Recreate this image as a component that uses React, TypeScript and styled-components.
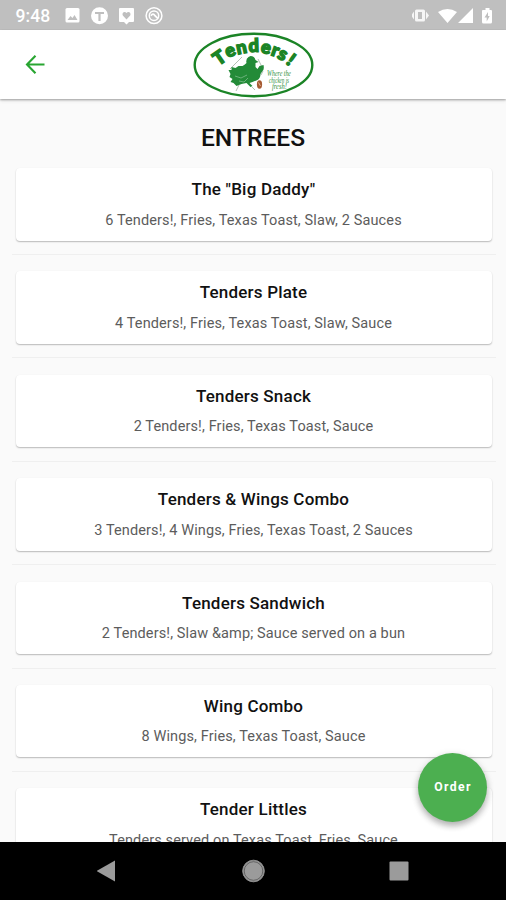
import React from 'react';
import styled, { createGlobalStyle } from 'styled-components';

const GlobalStyle = createGlobalStyle`
  * { box-sizing: border-box; }
  body { margin: 0; background: #fafafa; font-family: Roboto, 'Liberation Sans', sans-serif; }
`;

const Screen = styled.div`
  position: relative;
  display: flex;
  flex-direction: column;
  width: 506px;
  height: 900px;
  overflow: hidden;
  background: #fafafa;
`;

const StatusBar = styled.header`
  display: flex;
  align-items: center;
  justify-content: space-between;
  flex: none;
  height: 30px;
  padding: 1px 13px 0 15.5px;
  background: #bfbfbf;
  color: #fff;
`;

const StatusGroup = styled.div<{ $gap: number }>`
  display: flex;
  align-items: center;
  gap: ${({ $gap }) => $gap}px;
  svg { display: block; }
`;

const Clock = styled.span`
  width: 39px;
  font-size: 17.5px;
  font-weight: 500;
  line-height: 20px;
  letter-spacing: 0.1px;
  white-space: nowrap;
`;

const AppBar = styled.div`
  display: grid;
  grid-template-columns: 70px 1fr 70px;
  align-items: center;
  justify-items: center;
  flex: none;
  z-index: 1;
  height: 69px;
  background: #fff;
  box-shadow: 0 1px 2px rgba(0, 0, 0, 0.32), 0 2px 4px rgba(0, 0, 0, 0.08);
`;

const BackButton = styled.button`
  display: flex;
  padding: 0;
  border: 0;
  background: none;
`;

const Menu = styled.main`
  flex: 1;
  min-height: 0;
  overflow: hidden;
  padding: 23px 10.5px 0 11.5px;
`;

const Heading = styled.h1`
  margin: 0 1px 14px 0;
  font-size: 24.6px;
  font-weight: 500;
  line-height: 32px;
  text-align: center;
  color: #111;
`;

const Entry = styled.section`
  height: 103.4px;
  padding: 0 4px;
`;

const Card = styled.article`
  height: 72.5px;
  padding-top: 10px;
  border-radius: 4px;
  background: #fff;
  box-shadow: 0 1px 1.5px rgba(0, 0, 0, 0.26), 0 0 1px rgba(0, 0, 0, 0.04);
  text-align: center;
`;

const Name = styled.h2`
  margin: 0;
  font-size: 17px;
  font-weight: 500;
  line-height: 22px;
  letter-spacing: 0.2px;
  color: #111;
`;

const Description = styled.p`
  margin: 10.5px 0 0;
  font-size: 14.5px;
  line-height: 20px;
  letter-spacing: 0.12px;
  color: #5c5c5c;
`;

const Divider = styled.hr`
  height: 1px;
  margin: 13.5px -4px 0;
  border: 0;
  background: #efefef;
`;

const OrderButton = styled.button`
  position: absolute;
  top: 753px;
  left: 418px;
  width: 69px;
  height: 69px;
  padding: 0 0 2px 1px;
  border: 0;
  border-radius: 50%;
  background: #4caf50;
  box-shadow: 0 4px 6px rgba(0, 0, 0, 0.24), 0 2px 9px rgba(0, 0, 0, 0.12);
  color: #fff;
  font: 700 12.2px/16px Roboto, sans-serif;
  letter-spacing: 1.35px;
`;

const NavBar = styled.nav`
  display: grid;
  grid-template-columns: repeat(3, 146px);
  justify-content: center;
  justify-items: center;
  align-items: center;
  flex: none;
  height: 58px;
  background: #000;
  z-index: 1;
`;

const entrees = [
  ['The "Big Daddy"', '6 Tenders!, Fries, Texas Toast, Slaw, 2 Sauces'],
  ['Tenders Plate', '4 Tenders!, Fries, Texas Toast, Slaw, Sauce'],
  ['Tenders Snack', '2 Tenders!, Fries, Texas Toast, Sauce'],
  ['Tenders & Wings Combo', '3 Tenders!, 4 Wings, Fries, Texas Toast, 2 Sauces'],
  ['Tenders Sandwich', '2 Tenders!, Slaw &amp; Sauce served on a bun'],
  ['Wing Combo', '8 Wings, Fries, Texas Toast, Sauce'],
  ['Tender Littles', 'Tenders served on Texas Toast, Fries, Sauce'],
];

const letters: { char: string; x: number; y: number; angle: number; drop: number }[] = [
  { char: 'T', x: 27.5, y: 26, angle: -35, drop: 6 },
  { char: 'e', x: 38.3, y: 19.5, angle: -23, drop: 5 },
  { char: 'n', x: 49.5, y: 16.5, angle: -12, drop: 5 },
  { char: 'd', x: 61.8, y: 13.3, angle: -2, drop: 6.5 },
  { char: 'e', x: 74, y: 16.3, angle: 10, drop: 5 },
  { char: 'r', x: 83, y: 19.5, angle: 19, drop: 5 },
  { char: 's', x: 90.5, y: 23, angle: 28, drop: 5 },
  { char: '!', x: 98.8, y: 27.8, angle: 36, drop: 6 },
];

const Logo = () => (
  <svg width="122" height="66" viewBox="0 0 122 66">
    <ellipse cx="61.5" cy="33" rx="58.800" ry="31.2" fill="#fff" stroke="#1b8426" strokeWidth="2.4" />
    <g fill="#1b8426" stroke="#1b8426" strokeWidth="1.5" fontFamily="Lato, sans-serif" fontWeight="900" fontSize="18.2" textAnchor="middle">
      {letters.map(({ char, x, y, angle, drop }, i) => (
        <text key={i} y={drop} transform={`translate(${x} ${y}) rotate(${angle})`}>{char}</text>
      ))}
    </g>
    <path d="M38 37l12-12M66 27l5 10M47 53l-3 6M60 55l3 3M71 39l-2 4" fill="none" stroke="#a9b9ab" strokeWidth="0.9" />
    <path fill="#238b38" d="M54.500 31q-1-4 2-6l2-1q4 0 5 4l3 2-3 1 0 4 2 2 2-3 4-1q1 4-1 6l-2 3q0 4-3 6l-5 2-3 1 3 3-2 1-4-4-5 1-5 2-3-3-3-1 2-3-3-2 1-3-2-4 3 0 0-3 4 1 3-2 4 0q2-1 4-3z" />
    <path d="M43 44l6 2 6-3M47 49l5 1 4-4" fill="none" stroke="#71b580" strokeWidth="0.9" />
    <ellipse cx="67.500" cy="52.500" rx="2.6" ry="4.2" fill="#a65a32" />
    <path d="M66.500 50.500l2 3.500" stroke="#e0b090" />
    <g fill="#2f8f40" fontFamily="Liberation Serif, serif" fontStyle="italic" fontSize="7.2">
      <text x="75" y="44" textLength="24" lengthAdjust="spacingAndGlyphs">Where the</text>
      <text x="77" y="50.500" textLength="20" lengthAdjust="spacingAndGlyphs">chicken is</text>
      <text x="80" y="57" textLength="15" lengthAdjust="spacingAndGlyphs">fresh!</text>
    </g>
  </svg>
);

export default function App() {
  return (
    <Screen>
      <GlobalStyle />
      <StatusBar>
        <StatusGroup $gap={10}>
          <Clock>9:48</Clock>
          <svg width="15" height="15" viewBox="0 0 15 15"><rect x=".5" width="14" height="14.500" rx="1.5" fill="#fff" /><path d="M2.5 12l3-4 2 2 2-3 3 5z" fill="#bfbfbf" /></svg>
          <svg width="18" height="18" viewBox="0 0 18 18"><circle cx="9.500" cy="8.700" r="8.500" fill="#fff" /><path d="M5 6h9M9.500 6v8" fill="none" stroke="#bfbfbf" strokeWidth="2.2" /></svg>
          <svg width="17" height="18" viewBox="0 0 17 18"><path d="M2 1h13q1 0 1 1v12q0 1-1 1h-4l-2.500 2.500L6 15H2q-1 0-1-1V2q0-1 1-1z" fill="#fff" /><path d="M8.500 12.500L4.800 8.500C3.500 6 6.500 3.600 8.500 6c2-2.400 5 0 3.700 2.500z" fill="#bfbfbf" /></svg>
          <svg width="18" height="18" viewBox="0 0 18 18"><g fill="none" stroke="#fff"><circle cx="9" cy="8.700" r="7.900" strokeWidth="1.500" /><circle cx="9" cy="8.700" r="4.700" strokeWidth="1.500" /><path d="M6 8.700q2-3 4 0l3 3" strokeWidth="1.800" /></g></svg>
        </StatusGroup>
        <StatusGroup $gap={0}>
          <svg width="81" height="20" viewBox="0 0 81 20">
            <g fill="#fff">
              <path d="M-1 9.500l3-4v8zM17 9.500l-3-4v8z" opacity=".85" />
              <path d="M3 5q0-1.500 1.500-1.500h7q1.500 0 1.500 1.500v9q0 1.500-1.500 1.500h-7Q3 15.500 3 14zM6 6v7h4V6z" fillRule="evenodd" opacity=".85" />
              <path d="M26 6q9.500-6 19 0l-9.500 11zM61 2v15H46zM71 4h2.500V2h4v2H79q1 0 1 1v11q0 1.500-1.500 1.500h-7Q70 17.500 70 16V5q0-1 1-1z" />
            </g>
            <path d="M76 6l-3.500 5.500h2.200v4l3-5.500H76z" fill="#bfbfbf" />
          </svg>
        </StatusGroup>
      </StatusBar>
      <AppBar>
        <BackButton aria-label="Back">
          <svg width="20" height="20" viewBox="0 0 20 20"><path d="M19.500 9.500H2M10.500 .8L2 9.500l8.500 8.700" fill="none" stroke="#28a531" strokeWidth="2.100" /></svg>
        </BackButton>
        <Logo />
      </AppBar>
      <Menu>
        <Heading>ENTREES</Heading>
        {entrees.map(([name, description]) => (
          <Entry key={name}>
            <Card>
              <Name>{name}</Name>
              <Description>{description}</Description>
            </Card>
            <Divider />
          </Entry>
        ))}
      </Menu>
      <OrderButton>Order</OrderButton>
      <NavBar>
        <svg width="20" height="22" viewBox="0 0 20 22"><path d="M18 .5v21L-.5 11z" fill="#9b9b9b" /></svg>
        <svg width="24" height="24" viewBox="0 0 24 24"><circle cx="12.500" cy="12" r="10.800" fill="#9b9b9b" stroke="#8e8e8e" strokeWidth="1" /><circle cx="12.500" cy="12" r="9.300" fill="none" stroke="#555" strokeWidth=".8" /></svg>
        <svg width="20" height="20" viewBox="0 0 20 20"><rect x=".5" y=".5" width="19" height="19" rx="1" fill="#9b9b9b" /></svg>
      </NavBar>
    </Screen>
  );
}
